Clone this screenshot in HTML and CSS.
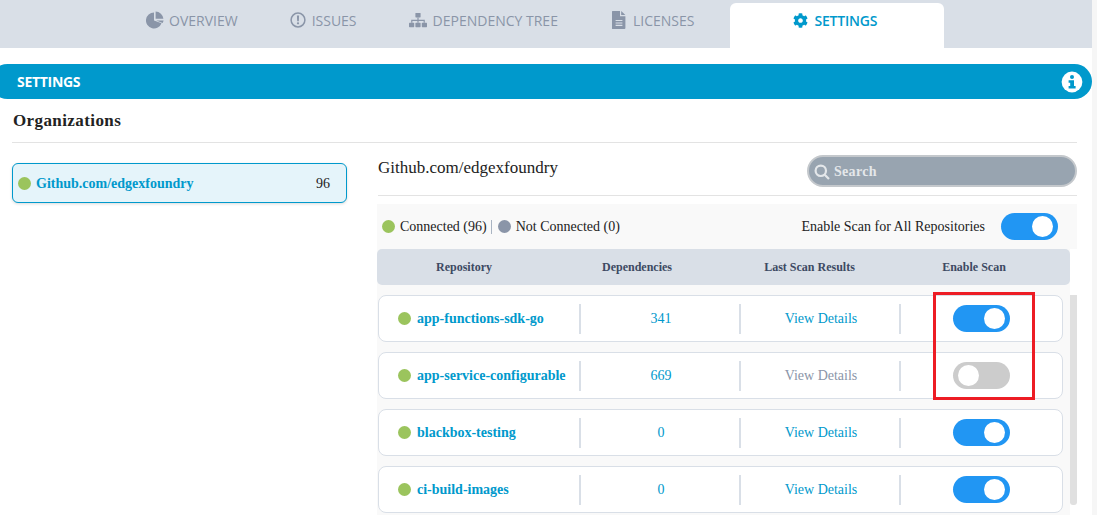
FILE: index.html
```html
<!DOCTYPE html>
<html lang="en">
<head>
<meta charset="utf-8">
<title>Settings</title>
<link rel="stylesheet" href="styles.css">
</head>
<body>
<div class="page">
  <nav class="tabs">
    <a class="tab tab-overview">
      <svg class="tab-icon" viewBox="0 0 18 18" width="18" height="18"><path d="M8 1.5A8 8 0 1 0 15.5 12.2L8 9.5Z"/><path d="M9.6 0.6A8 8 0 0 1 17.4 7.8H9.6Z"/><path d="M10.2 9.4H17.6A8 8 0 0 1 16.6 11.9Z"/></svg>
      <span>OVERVIEW</span>
    </a>
    <a class="tab tab-issues">
      <svg class="tab-icon" viewBox="0 0 16 16" width="16" height="16"><circle class="ring" cx="8" cy="8" r="6.9"/><path d="M6.9 3.6H9.1L8.8 9.3H7.2Z"/><circle cx="8" cy="11.3" r="1.15"/></svg>
      <span>ISSUES</span>
    </a>
    <a class="tab tab-tree">
      <svg class="tab-icon" viewBox="0 0 18 16" width="18" height="16"><rect x="6.4" y="1" width="5.2" height="4.4" rx=".6"/><rect x="0" y="10.8" width="5.2" height="4.4" rx=".6"/><rect x="6.4" y="10.8" width="5.2" height="4.4" rx=".6"/><rect x="12.8" y="10.8" width="5.2" height="4.4" rx=".6"/><path d="M8.4 5.4h1.2v2.3h6.2v3.1h-1.2V8.9H9.6v1.9H8.4V8.9H3.4v1.9H2.2V7.7h6.2Z"/></svg>
      <span>DEPENDENCY TREE</span>
    </a>
    <a class="tab tab-licenses">
      <svg class="tab-icon" viewBox="0 0 14 18" width="14" height="18"><path d="M0.6 0H8V5.2H13.4V17.1a.9.9 0 0 1-.9.9H0.6a.6.6 0 0 1-.6-.6V.6A.6.6 0 0 1 .6 0Z"/><path d="M9.2 0 13.4 4H9.2Z"/><path class="lines" d="M3.6 9h6.8v1.1H3.6ZM3.6 11.4h6.8v1.1H3.6ZM3.6 13.8h6.8v1.1H3.6Z"/></svg>
      <span>LICENSES</span>
    </a>
    <a class="tab tab-active">
      <svg class="tab-icon" viewBox="0 0 512 512" width="15" height="15"><path d="M487.4 315.7l-42.6-24.6c4.3-23.2 4.3-47 0-70.2l42.6-24.6c4.9-2.8 7.1-8.6 5.5-14-11.1-35.6-30-67.8-54.7-94.6-3.8-4.1-10-5.1-14.8-2.3L380.8 110c-17.9-15.4-38.5-27.3-60.8-35.1V25.8c0-5.6-3.9-10.5-9.4-11.7-36.7-8.2-74.3-7.8-109.2 0-5.5 1.2-9.4 6.1-9.4 11.7V75c-22.2 7.9-42.8 19.8-60.8 35.1L88.7 85.5c-4.9-2.8-11-1.9-14.8 2.3-24.7 26.7-43.6 58.9-54.7 94.6-1.7 5.4.6 11.2 5.5 14L67.3 221c-4.3 23.2-4.3 47 0 70.2l-42.6 24.6c-4.9 2.8-7.1 8.6-5.5 14 11.1 35.6 30 67.8 54.7 94.6 3.8 4.1 10 5.1 14.8 2.3l42.6-24.6c17.9 15.4 38.5 27.3 60.8 35.1v49.2c0 5.6 3.9 10.5 9.4 11.7 36.7 8.2 74.3 7.8 109.2 0 5.5-1.2 9.4-6.1 9.4-11.7v-49.2c22.2-7.9 42.8-19.8 60.8-35.1l42.6 24.6c4.9 2.8 11 1.9 14.8-2.3 24.7-26.7 43.6-58.9 54.7-94.6 1.5-5.5-.7-11.3-5.6-14.1zM256 336c-44.1 0-80-35.9-80-80s35.9-80 80-80 80 35.9 80 80-35.9 80-80 80z"/></svg>
      <span>SETTINGS</span>
    </a>
  </nav>

  <header class="bar">
    <span class="bar-title">SETTINGS</span>
    <svg class="bar-info" viewBox="0 0 22 22" width="22" height="22"><circle class="info-disc" cx="11" cy="11" r="10.4"/><circle class="info-mark" cx="11" cy="6" r="2"/><path class="info-mark" d="M7.6 9.2H13V15H14.6V17.6H7.6V15H9.2V11.7H7.6Z"/></svg>
  </header>

  <h2 class="org-heading">Organizations</h2>

  <div class="content">
    <aside class="side">
      <div class="org-card">
        <span class="dot dot-card"></span>
        <span class="org-name">Github.com/edgexfoundry</span>
        <span class="org-count">96</span>
      </div>
    </aside>

    <main class="detail">
      <div class="detail-head">
        <h3 class="detail-title">Github.com/edgexfoundry</h3>
        <div class="search">
          <svg viewBox="0 0 16 16" width="16" height="16"><circle cx="6.8" cy="6.8" r="5.2"/><path d="M10.7 10.7 15 15"/></svg>
          <span>Search</span>
        </div>
      </div>

      <div class="panel">
        <div class="toolbar">
          <div class="legend">
            <span class="dot"></span><span class="legend-text">Connected (96)</span>
            <span class="legend-sep"></span>
            <span class="dot dot-off"></span><span class="legend-text">Not Connected (0)</span>
          </div>
          <div class="all-scan">
            <span>Enable Scan for All Repositories</span>
            <span class="toggle"><span class="knob"></span></span>
          </div>
        </div>

        <div class="table-head">
          <span>Repository</span>
          <span>Dependencies</span>
          <span>Last Scan Results</span>
          <span>Enable Scan</span>
        </div>

        <div class="table-body">
          <div class="rows">
            <div class="row">
              <div class="cell cell-name"><span class="dot"></span><a class="repo">app-functions-sdk-go</a></div>
              <div class="cell cell-link">341</div>
              <div class="cell cell-link">View Details</div>
              <div class="cell cell-toggle"><span class="toggle"><span class="knob"></span></span></div>
            </div>
            <div class="row">
              <div class="cell cell-name"><span class="dot"></span><a class="repo">app-service-configurable</a></div>
              <div class="cell cell-link">669</div>
              <div class="cell cell-muted">View Details</div>
              <div class="cell cell-toggle"><span class="toggle toggle-off"><span class="knob"></span></span></div>
            </div>
            <div class="row">
              <div class="cell cell-name"><span class="dot"></span><a class="repo">blackbox-testing</a></div>
              <div class="cell cell-link">0</div>
              <div class="cell cell-link">View Details</div>
              <div class="cell cell-toggle"><span class="toggle"><span class="knob"></span></span></div>
            </div>
            <div class="row">
              <div class="cell cell-name"><span class="dot"></span><a class="repo">ci-build-images</a></div>
              <div class="cell cell-link">0</div>
              <div class="cell cell-link">View Details</div>
              <div class="cell cell-toggle"><span class="toggle"><span class="knob"></span></span></div>
            </div>
          </div>
          <div class="track"></div>
        </div>

        <div class="highlight"></div>
      </div>
    </main>
  </div>
</div>
<div class="page-scroll"></div>
</body>
</html>
```
FILE: styles.css
```css
* { box-sizing: border-box; }

html, body {
  margin: 0;
  height: 515px;
  overflow: hidden;
  background: #fff;
}

body {
  display: flex;
  font-family: "Liberation Serif", "Times New Roman", serif;
  font-size: 14px;
  color: #222;
}

.page { width: 1092px; flex: none; }
.page-scroll { width: 5px; background: #f6f6f6; }

/* Tabs */
.tabs {
  display: flex;
  align-items: flex-start;
  height: 48px;
  padding: 3px 0 0 146px;
  background: #d9dfe7;
  font-family: "Open Sans", sans-serif;
  font-size: 14px;
  color: #8a95a8;
}

.tab { display: flex; align-items: center; height: 34px; }
.tab-icon { flex: none; fill: currentColor; }
.tab-overview .tab-icon { margin-right: 5px; }
.tab-issues { margin-left: 52px; }
.tab-issues .tab-icon { margin-right: 6px; }
.tab-tree { margin-left: 52px; }
.tab-tree .tab-icon { margin-right: 6px; }
.tab-licenses { margin-left: 54px; }
.tab-licenses .tab-icon { margin-right: 7px; }

.ring { fill: none; stroke: currentColor; stroke-width: 1.5; }
.lines { fill: #d9dfe7; }

.tab-active {
  height: 45px;
  width: 214px;
  margin-left: 36px;
  padding: 0 0 11px 63px;
  background: #fff;
  border-radius: 6px 6px 0 0;
  color: #0099cc;
  font-weight: 600;
  letter-spacing: -0.2px;
}
.tab-active .tab-icon { margin-right: 6px; }

/* Section bar */
.bar {
  display: flex;
  align-items: center;
  justify-content: space-between;
  height: 35px;
  margin: 16px 0 0 -10px;
  padding: 0 9px 0 27px;
  background: #0099cc;
  border-radius: 18px;
}
.bar-title {
  font-family: "Open Sans", sans-serif;
  font-size: 14px;
  font-weight: 700;
  letter-spacing: -0.3px;
  color: #fff;
}
.info-disc { fill: #fff; }
.info-mark { fill: #0099cc; }

/* Organizations heading */
.org-heading {
  display: flex;
  align-items: center;
  height: 44px;
  margin: 0 15px 0 12px;
  padding: 0 0 0 1px;
  border-bottom: 1px solid #e3e3e3;
  font-size: 17px;
  font-weight: 700;
  letter-spacing: 0.4px;
  color: #222;
}

.content {
  display: flex;
  gap: 31px;
  margin: 0 15px 0 12px;
}

.side { width: 335px; flex: none; padding-top: 20px; }

.org-card {
  display: flex;
  align-items: center;
  height: 40px;
  padding: 0 16px 0 5px;
  background: #e5f4fa;
  border: 1px solid #0099cc;
  border-radius: 6px;
  box-shadow: 0 1px 3px rgba(0, 0, 0, .15);
}
.org-name {
  flex: 1;
  margin-left: 5px;
  padding-top: 1px;
  font-weight: 700;
  color: #0099cc;
}
.org-count { padding-top: 1px; }

.dot {
  flex: none;
  display: block;
  width: 13px;
  height: 13px;
  border-radius: 50%;
  background: #9bc45d;
}
.dot-off { background: #8a95a8; }

.detail { flex: 1; min-width: 0; }

.detail-head {
  display: flex;
  align-items: flex-start;
  justify-content: space-between;
  height: 53px;
  padding-top: 12px;
  border-bottom: 1px solid #e3e3e3;
}
.detail-title {
  margin: 0;
  padding-top: 1px;
  font-size: 17px;
  line-height: 24px;
  font-weight: 400;
  color: #222;
}

.search {
  display: flex;
  align-items: center;
  gap: 4px;
  width: 270px;
  height: 32px;
  padding: 1px 0 0 5px;
  background: #98a4b0;
  border: 2px solid #c4c8cc;
  border-radius: 16px;
  font-weight: 700;
  letter-spacing: 0.3px;
  color: #e4e7ea;
}
.search svg { fill: none; stroke: #e4e7ea; stroke-width: 2.2; }

/* Panel */
.panel {
  position: relative;
  margin: 8px 0 0 -1px;
  background: linear-gradient(#f9f9f9, #f9f9f9) left / 693px 100% no-repeat;
}

.toolbar {
  display: flex;
  align-items: center;
  justify-content: space-between;
  height: 45px;
  padding: 0 19px 0 5px;
  background: #f9f9f9;
}
.legend { display: flex; align-items: center; }
.legend-text { margin-left: 5px; }
.legend-sep {
  width: 1px;
  height: 14px;
  margin: 0 6px 0 4px;
  background: #a9b4c2;
}
.all-scan { display: flex; align-items: center; gap: 16px; }

.table-head {
  display: grid;
  grid-template-columns: 174px 172px 173px 156px;
  align-items: center;
  width: 693px;
  height: 36px;
  background: #d9dfe7;
  border-radius: 5px;
  font-size: 12px;
  font-weight: 700;
  color: #3d4a63;
  text-align: center;
}

.table-body { display: flex; }
.rows { width: 693px; flex: none; padding: 10px 7px 0 1px; }

.row {
  display: grid;
  grid-template-columns: 200px 160px 160px 1fr;
  align-items: center;
  height: 47px;
  margin-bottom: 10px;
  background: #fff;
  border: 1px solid #d9dfe7;
  border-radius: 8px;
}

.cell {
  display: flex;
  align-items: center;
  justify-content: center;
  height: 30px;
  padding-left: 2px;
  border-left: 2px solid #d9dfe7;
}
.cell-name { justify-content: flex-start; padding-left: 19px; border-left: 0; }
.cell-toggle { padding-left: 0; }
.cell-link { color: #0099cc; }
.cell-muted { color: #8a95a8; }
.repo { margin-left: 6px; font-weight: 700; color: #0099cc; }

.track {
  width: 7px;
  height: 210px;
  margin-top: 10px;
  background: #e0e0e0;
  border-radius: 0 0 3px 3px;
}

/* Toggle */
.toggle {
  display: flex;
  align-items: center;
  justify-content: flex-end;
  width: 57px;
  height: 27px;
  padding: 0 5px;
  background: #2196f3;
  border-radius: 14px;
}
.toggle-off { justify-content: flex-start; background: #ccc; }
.knob {
  display: block;
  width: 21px;
  height: 21px;
  background: #fff;
  border-radius: 50%;
}

/* Annotation drawn on the screenshot */
.highlight {
  position: absolute;
  top: 88px;
  left: 556px;
  width: 102px;
  height: 108px;
  border: 3px solid #ed1c24;
  pointer-events: none;
}
```
